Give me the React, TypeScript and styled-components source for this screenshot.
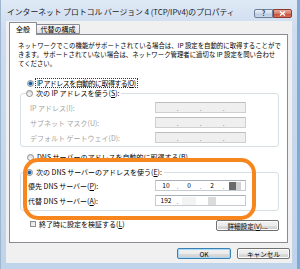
import React from 'react';
import styled, { createGlobalStyle } from 'styled-components';

const GlobalStyle = createGlobalStyle`
  html, body {
    margin: 0;
    padding: 0;
  }
  body {
    font-family: "Noto Sans CJK JP", "Noto Sans", sans-serif;
    color: #000;
  }
`;

const Window = styled.div`
  width: 300px;
  height: 269px;
  display: flex;
  flex-direction: column;
  background: linear-gradient(180deg, #dfe9f6 0%, #cddcef 30px, #bfd3ea 100%);
  box-shadow: inset -3px 0 0 #7ea9d8, inset 1px 0 0 #9fb6cf;
`;

const TitleBar = styled.div`
  height: 21px;
  display: flex;
  align-items: center;
  padding: 1px 8px 0 7px;
  box-sizing: border-box;
`;

const Title = styled.div`
  flex: 1;
  font-size: 7.8px;
  white-space: nowrap;
  color: #1a1a1a;
`;

const CaptionButtons = styled.div`
  display: flex;
  align-self: flex-start;
  margin-top: 8px;
`;

const CaptionButton = styled.div<{ $close?: boolean }>`
  width: 19px;
  height: 9px;
  box-sizing: border-box;
  display: flex;
  align-items: center;
  justify-content: center;
  border: 1px solid ${(p) => (p.$close ? '#8c3a2e' : '#6d7f96')};
  border-radius: ${(p) => (p.$close ? '0 2px 2px 0' : '2px 0 0 2px')};
  background: ${(p) =>
    p.$close
      ? 'linear-gradient(#eaa89c, #d77a66 50%, #c4452f 51%, #d8735c)'
      : 'linear-gradient(#e9f0f8, #ccd9ea 50%, #b6c8de 51%, #cbdaec)'};
  font-size: 7px;
  font-weight: bold;
  color: #2a3f5a;
  line-height: 1;
`;

const Client = styled.div`
  flex: 1;
  margin: 0 8px 6px 6px;
  background: #f0f0f0;
  padding: 1px 4px 4px 3px;
  display: flex;
  flex-direction: column;
`;

const TabRow = styled.div`
  height: 12px;
  display: flex;
  align-items: flex-end;
  position: relative;
  z-index: 1;
`;

const Tab = styled.div<{ $active?: boolean }>`
  box-sizing: border-box;
  height: ${(p) => (p.$active ? '13px' : '10px')};
  width: ${(p) => (p.$active ? '28px' : '44px')};
  margin-bottom: ${(p) => (p.$active ? '-1px' : '0')};
  margin-left: ${(p) => (p.$active ? '0' : '-1px')};
  border: 1px solid #898c95;
  border-bottom: ${(p) => (p.$active ? 'none' : '1px solid #898c95')};
  background: ${(p) => (p.$active ? '#fff' : 'linear-gradient(#f6f6f6, #e3e3e3)')};
  border-radius: 1px 1px 0 0;
  font-size: 7px;
  display: flex;
  align-items: center;
  justify-content: center;
  white-space: nowrap;
`;

const Panel = styled.div`
  position: relative;
  height: 209px;
  box-sizing: border-box;
  border: 1px solid #898c95;
  background: #fff;
  padding-top: 6px;
  display: flex;
  flex-direction: column;
`;

const Description = styled.div`
  margin-left: 8px;
  font-size: 6.4px;
  line-height: 9px;
  white-space: nowrap;
`;

const RadioRow = styled.div<{ $top?: number }>`
  height: 10px;
  display: flex;
  align-items: center;
  gap: 2px;
  padding-left: 17px;
  margin-top: ${(p) => p.$top ?? 0}px;
`;

const RadioDot = styled.span<{ $checked?: boolean }>`
  width: 7px;
  height: 7px;
  box-sizing: border-box;
  border-radius: 50%;
  flex-shrink: 0;
  border: 1px solid #8d8d8d;
  background: ${(p) =>
    p.$checked
      ? 'radial-gradient(circle, #1f5f9e 0 1.3px, #5aa0dc 1.9px, #eef2f6 2.4px)'
      : 'linear-gradient(#d8d8d8, #fbfbfb)'};
`;

const OptionText = styled.span<{ $focus?: boolean; $muted?: boolean; $tight?: boolean }>`
  font-size: 7px;
  line-height: 8px;
  white-space: nowrap;
  color: ${(p) => (p.$muted ? '#9a9a9a' : '#000')};
  outline: ${(p) => (p.$focus ? '1px dotted #333' : 'none')};
  letter-spacing: ${(p) => (p.$tight ? '-0.55px' : '0')};
  padding: 0 1px;
`;

const Key = styled.span`
  text-decoration: underline;
`;

const GroupBox = styled.fieldset<{ $top?: number }>`
  margin: ${(p) => p.$top ?? 0}px 8px 0 10px;
  padding: 0;
  border: 1px solid #d5dfe5;
  border-radius: 3px;
  min-width: 0;
`;

const GroupLegend = styled.legend`
  margin-left: 5px;
  padding: 0 1px 0 0;
  height: 10px;
  display: flex;
  align-items: center;
  gap: 2px;
  background: #fff;
`;

const FieldGrid = styled.div<{ $indent: number; $pt: number; $pb: number }>`
  display: grid;
  grid-template-columns: 1fr 91px;
  row-gap: 4px;
  align-items: center;
  padding: ${(p) => p.$pt}px 32px ${(p) => p.$pb}px ${(p) => p.$indent}px;
`;

const FieldLabel = styled.span<{ $muted?: boolean }>`
  font-size: 7px;
  white-space: nowrap;
  color: ${(p) => (p.$muted ? '#a3a3a3' : '#000')};
`;

const IpBox = styled.div<{ $disabled?: boolean }>`
  height: 11px;
  box-sizing: border-box;
  display: flex;
  align-items: center;
  border: 1px solid ${(p) => (p.$disabled ? '#cfcfcf' : '#c6cbd2')};
  border-top-color: ${(p) => (p.$disabled ? '#bdbdbd' : '#a9afb8')};
  background: ${(p) => (p.$disabled ? '#efefef' : '#fff')};
`;

const Segment = styled.span`
  width: 20px;
  display: flex;
  justify-content: center;
  align-items: center;
  font-size: 6.6px;
  line-height: 9px;
`;

const Dot = styled.span<{ $hidden?: boolean }>`
  width: 3px;
  text-align: center;
  font-size: 6px;
  line-height: 9px;
  color: ${(p) => (p.$hidden ? 'transparent' : '#555')};
  margin-top: 2px;
`;

const Block = styled.span<{ $w: number; $c: string }>`
  display: inline-block;
  width: ${(p) => p.$w}px;
  height: 8px;
  background: ${(p) => p.$c};
`;

const CheckRow = styled.div`
  margin-top: 8px;
  padding: 0 8px 0 20px;
  display: flex;
  align-items: flex-start;
  justify-content: space-between;
`;

const CheckLabel = styled.div`
  display: flex;
  align-items: center;
  gap: 2px;
  height: 9px;
`;

const CheckBox = styled.span`
  width: 6px;
  height: 6px;
  box-sizing: border-box;
  border: 1px solid #8d8d8d;
  background: linear-gradient(135deg, #dcdcdc, #fafafa);
`;

const Button = styled.div<{ $w: number; $default?: boolean; $top?: number }>`
  width: ${(p) => p.$w}px;
  height: 11px;
  box-sizing: border-box;
  margin-top: ${(p) => p.$top ?? 0}px;
  display: flex;
  align-items: center;
  justify-content: center;
  font-size: 6.6px;
  white-space: nowrap;
  border: 1px solid ${(p) => (p.$default ? '#3c7fb1' : '#707070')};
  border-radius: 2px;
  background: linear-gradient(#f2f2f2 0%, #ebebeb 50%, #dddddd 51%, #cfcfcf 100%);
  box-shadow: ${(p) => (p.$default ? 'inset 0 0 0 1px #a8d8f7' : 'inset 0 0 0 1px #fcfcfc')};
`;

const ButtonBar = styled.div`
  margin-top: 5px;
  margin-right: -2px;
  display: flex;
  justify-content: flex-end;
  gap: 6px;
`;

const Highlight = styled.div`
  position: absolute;
  left: 13px;
  top: 123px;
  width: 233px;
  height: 62px;
  box-sizing: border-box;
  border: 4px solid #f7861f;
  border-radius: 15px;
  pointer-events: none;
`;

type Seg = { text?: string; blocks?: { w: number; c: string }[] };

const IpField = ({ segs, disabled, hideDots = [] }: { segs: Seg[]; disabled?: boolean; hideDots?: number[] }) => (
  <IpBox $disabled={disabled}>
    {segs.map((s, i) => (
      <React.Fragment key={i}>
        {i > 0 && <Dot $hidden={hideDots.includes(i)}>.</Dot>}
        <Segment>
          {s.text}
          {s.blocks?.map((b, j) => (
            <Block key={j} $w={b.w} $c={b.c} />
          ))}
        </Segment>
      </React.Fragment>
    ))}
  </IpBox>
);

const empty: Seg[] = [{}, {}, {}, {}];

export default function App() {
  return (
    <>
      <GlobalStyle />
      <Window>
        <TitleBar>
          <Title>インターネット プロトコル バージョン 4 (TCP/IPv4)のプロパティ</Title>
          <CaptionButtons>
            <CaptionButton>?</CaptionButton>
            <CaptionButton $close>
              <svg width="7" height="5" viewBox="0 0 7 5">
                <path d="M1 0.5 L6 4.5 M6 0.5 L1 4.5" stroke="#fff" strokeWidth="1.4" />
              </svg>
            </CaptionButton>
          </CaptionButtons>
        </TitleBar>
        <Client>
          <TabRow>
            <Tab $active>全般</Tab>
            <Tab>代替の構成</Tab>
          </TabRow>
          <Panel>
            <Description>
              ネットワークでこの機能がサポートされている場合は、IP 設定を自動的に取得することがで
              <br />
              きます。サポートされていない場合は、ネットワーク管理者に適切な IP 設定を問い合わせ
              <br />
              てください。
            </Description>

            <RadioRow $top={10}>
              <RadioDot $checked />
              <OptionText $focus $tight>
                IP アドレスを自動的に取得する(<Key>O</Key>)
              </OptionText>
            </RadioRow>

            <GroupBox>
              <GroupLegend>
                <RadioDot />
                <OptionText>
                  次の IP アドレスを使う(<Key>S</Key>):
                </OptionText>
              </GroupLegend>
              <FieldGrid $indent={9} $pt={4} $pb={3}>
                <FieldLabel $muted>IP アドレス(I):</FieldLabel>
                <IpField segs={empty} disabled />
                <FieldLabel $muted>サブネット マスク(U):</FieldLabel>
                <IpField segs={empty} disabled />
                <FieldLabel $muted>デフォルト ゲートウェイ(D):</FieldLabel>
                <IpField segs={empty} disabled />
              </FieldGrid>
            </GroupBox>

            <RadioRow $top={5}>
              <RadioDot />
              <OptionText>
                DNS サーバーのアドレスを自動的に取得する(<Key>B</Key>)
              </OptionText>
            </RadioRow>

            <GroupBox $top={5}>
              <GroupLegend>
                <RadioDot $checked />
                <OptionText>
                  次の DNS サーバーのアドレスを使う(<Key>E</Key>):
                </OptionText>
              </GroupLegend>
              <FieldGrid $indent={7} $pt={3} $pb={4}>
                <FieldLabel>
                  優先 DNS サーバー(<Key>P</Key>):
                </FieldLabel>
                <IpField
                  segs={[
                    { text: '10' },
                    { text: '0' },
                    { text: '2' },
                    { blocks: [{ w: 7, c: '#6a6a6a' }, { w: 5, c: '#d2d2d2' }] },
                  ]}
                />
                <FieldLabel>
                  代替 DNS サーバー(<Key>A</Key>):
                </FieldLabel>
                <IpField
                  segs={[
                    { text: '192' },
                    { blocks: [{ w: 14, c: '#f3f3f3' }] },
                    { blocks: [{ w: 8, c: '#dcdcdc' }] },
                    {},
                  ]}
                  hideDots={[2, 3]}
                />
              </FieldGrid>
            </GroupBox>

            <CheckRow>
              <CheckLabel>
                <CheckBox />
                <OptionText>
                  終了時に設定を検証する(<Key>L</Key>)
                </OptionText>
              </CheckLabel>
              <Button $w={63} $top={1}>
                詳細設定(<Key>V</Key>)...
              </Button>
            </CheckRow>

            <Highlight />
          </Panel>
          <ButtonBar>
            <Button $w={54} $default>
              OK
            </Button>
            <Button $w={53}>キャンセル</Button>
          </ButtonBar>
        </Client>
      </Window>
    </>
  );
}
